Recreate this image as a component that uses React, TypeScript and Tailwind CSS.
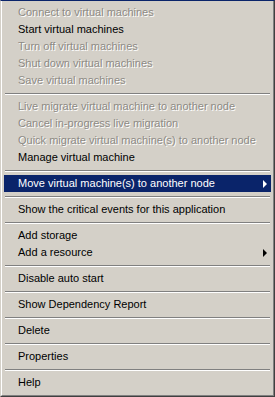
import React from 'react';

type Item = { label: string; disabled?: boolean; active?: boolean; submenu?: boolean };

// groups of menu items, separated by etched lines
const groups: Item[][] = [
  [
    { label: 'Connect to virtual machines', disabled: true },
    { label: 'Start virtual machines' },
    { label: 'Turn off virtual machines', disabled: true },
    { label: 'Shut down virtual machines', disabled: true },
    { label: 'Save virtual machines', disabled: true },
  ],
  [
    { label: 'Live migrate virtual machine to another node', disabled: true },
    { label: 'Cancel in-progress live migration', disabled: true },
    { label: 'Quick migrate virtual machine(s) to another node', disabled: true },
    { label: 'Manage virtual machine' },
  ],
  [{ label: 'Move virtual machine(s) to another node', active: true, submenu: true }],
  [{ label: 'Show the critical events for this application' }],
  [{ label: 'Add storage' }, { label: 'Add a resource', submenu: true }],
  [{ label: 'Disable auto start' }],
  [{ label: 'Show Dependency Report' }],
  [{ label: 'Delete' }],
  [{ label: 'Properties' }],
  [{ label: 'Help' }],
];

const Arrow = ({ color }: { color: string }): React.JSX.Element => (
  <svg width="4" height="8" viewBox="0 0 4 8" className="shrink-0">
    <path d="M0 0 L4 4 L0 8 Z" fill={color} />
  </svg>
);

const MenuRow = ({ item }: { item: Item }): React.JSX.Element => {
  let cls = 'text-black';
  if (item.disabled) cls = 'text-[#8d8a84] [text-shadow:1px_1px_0_#ffffff]';
  if (item.active) cls = 'bg-[#0a246a] text-white';
  return (
    <div className={`flex h-[17px] items-center justify-between pl-[14px] pr-[4px] ${cls}`}>
      <span className="whitespace-nowrap leading-[17px]">{item.label}</span>
      {item.submenu && <Arrow color={item.active ? '#ffffff' : '#000000'} />}
    </div>
  );
};

const Separator = (): React.JSX.Element => (
  <div className="flex h-[9px] flex-col justify-center px-[1px]">
    <div className="h-px bg-[#808080]" />
    <div className="h-px bg-white" />
  </div>
);

export default function App(): React.JSX.Element {
  return (
    <div className="h-[397px] w-[275px] overflow-hidden bg-[#d4d0c8]">
      <div
        className="flex h-full flex-col border-t border-r border-b border-l border-t-[#0a246a] border-r-[#404040] border-b-[#404040] border-l-[#d4d0c8] font-['Liberation_Sans',Arial,sans-serif] text-[11px]"
      >
        <div className="flex h-full flex-col border-r border-b border-l border-r-[#808080] border-b-[#808080] border-l-white px-[2px] pt-[3px]">
          {groups.map((g, gi) => (
            <React.Fragment key={gi}>
              {gi > 0 && <Separator />}
              {g.map((item) => (
                <MenuRow key={item.label} item={item} />
              ))}
            </React.Fragment>
          ))}
        </div>
      </div>
    </div>
  );
}
